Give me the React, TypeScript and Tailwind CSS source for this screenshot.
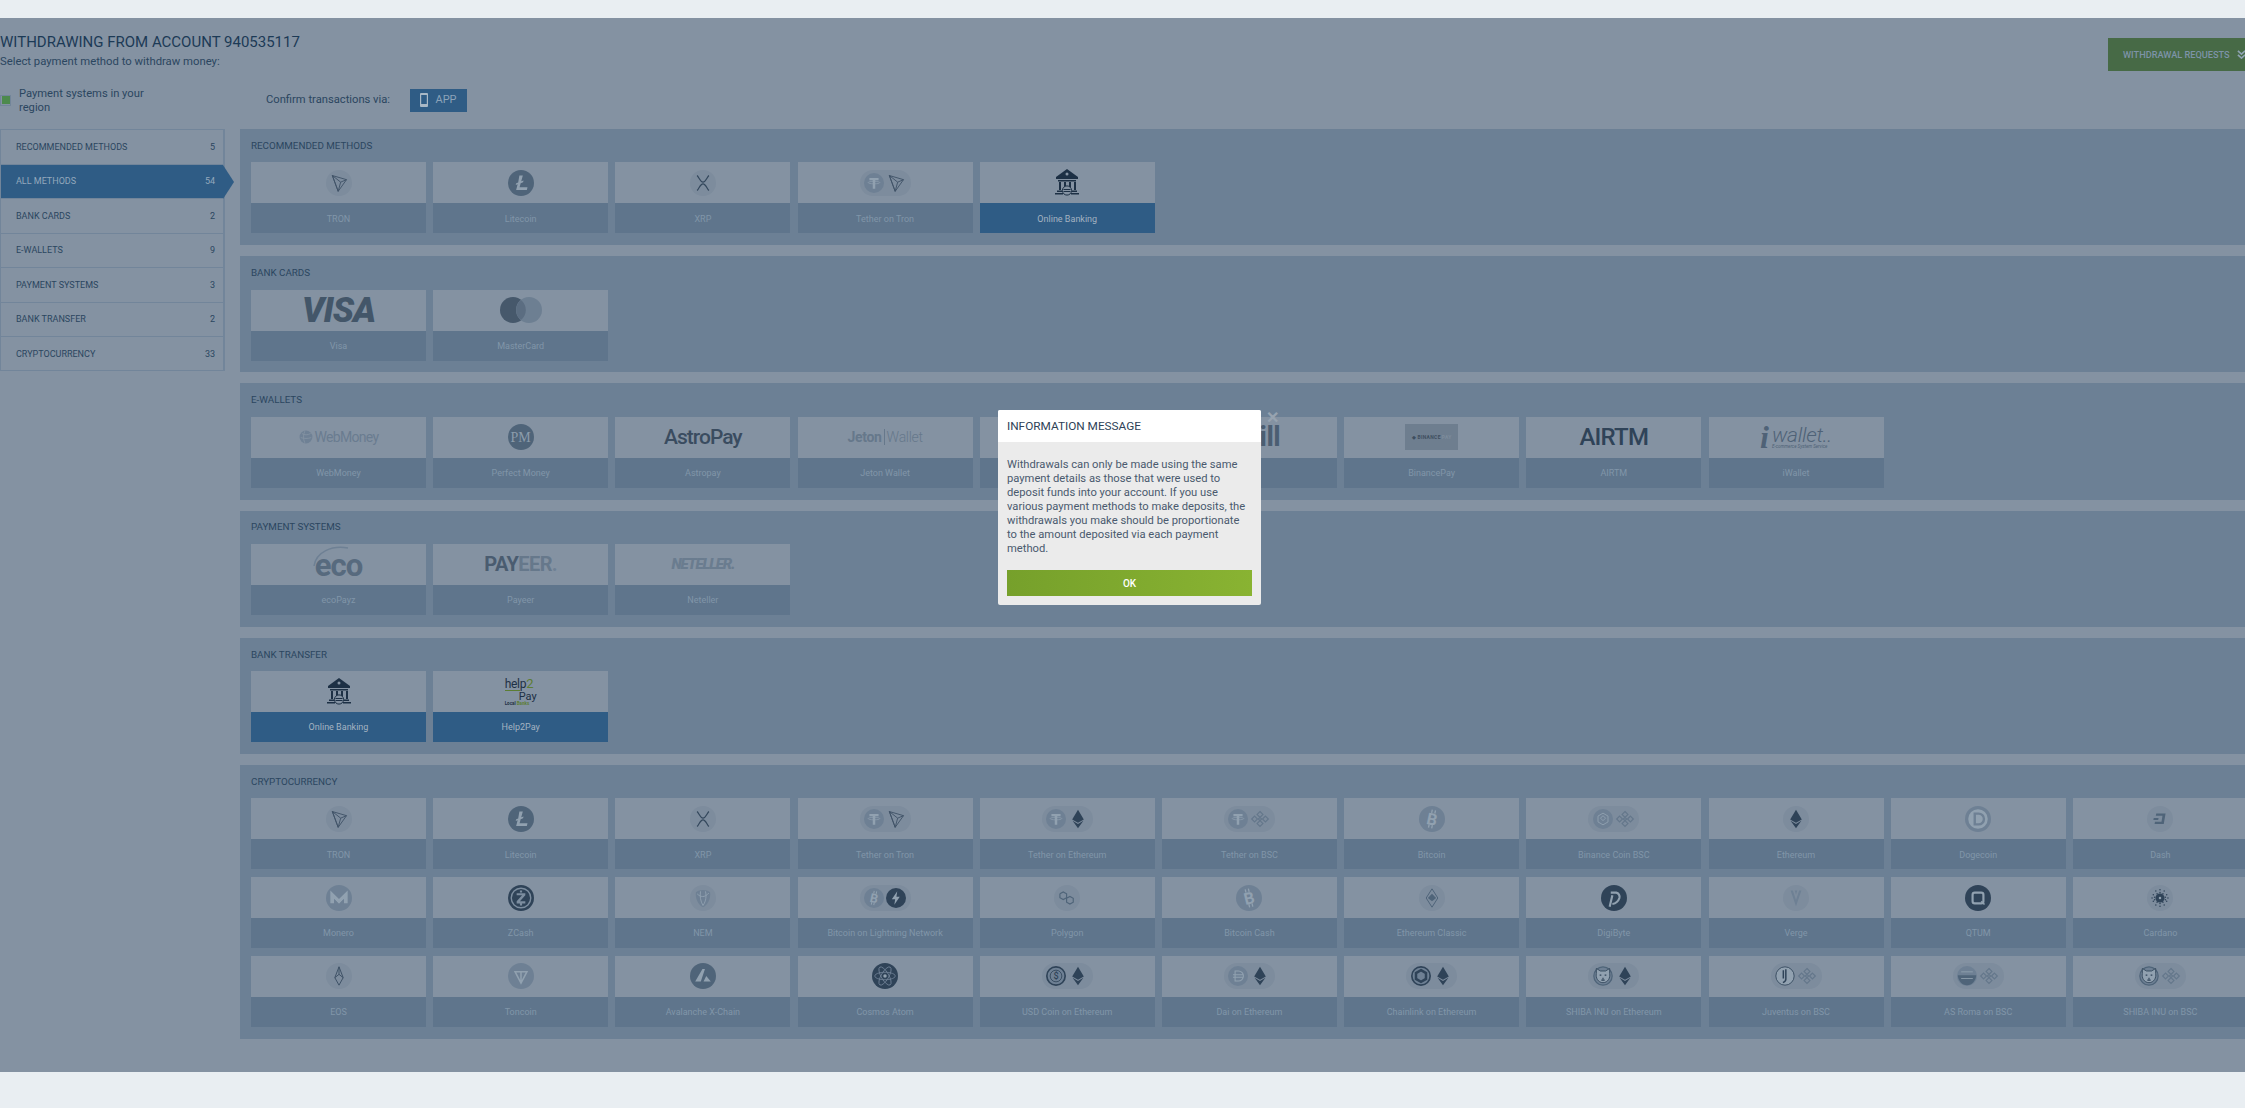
import type { ReactNode } from "react";

const DARK = "#2f4358";
const MID = "#4f6479";
const SOFT = "#6e8094";
const PALE = "#91a1b0";

const sideItems = [
  { label: "Recommended methods", count: 5 },
  { label: "All methods", count: 54, active: true },
  { label: "Bank cards", count: 2 },
  { label: "E-wallets", count: 9 },
  { label: "Payment systems", count: 3 },
  { label: "Bank transfer", count: 2 },
  { label: "Cryptocurrency", count: 33 },
];

type Method = { name: string; logo: string; active?: boolean };

const sections: { title: string; items: Method[] }[] = [
  {
    title: "Recommended methods",
    items: [
      { name: "TRON", logo: "tron" },
      { name: "Litecoin", logo: "ltc" },
      { name: "XRP", logo: "xrp" },
      { name: "Tether on Tron", logo: "usdt+tron" },
      { name: "Online Banking", logo: "bank", active: true },
    ],
  },
  {
    title: "Bank cards",
    items: [
      { name: "Visa", logo: "visa" },
      { name: "MasterCard", logo: "mastercard" },
    ],
  },
  {
    title: "E-wallets",
    items: [
      { name: "WebMoney", logo: "webmoney" },
      { name: "Perfect Money", logo: "pm" },
      { name: "Astropay", logo: "astropay" },
      { name: "Jeton Wallet", logo: "jeton" },
      { name: "", logo: "" },
      { name: "Skrill", logo: "skrill" },
      { name: "BinancePay", logo: "binancepay" },
      { name: "AIRTM", logo: "airtm" },
      { name: "iWallet", logo: "iwallet" },
    ],
  },
  {
    title: "Payment systems",
    items: [
      { name: "ecoPayz", logo: "eco" },
      { name: "Payeer", logo: "payeer" },
      { name: "Neteller", logo: "neteller" },
    ],
  },
  {
    title: "Bank transfer",
    items: [
      { name: "Online Banking", logo: "bank", active: true },
      { name: "Help2Pay", logo: "help2pay", active: true },
    ],
  },
  {
    title: "Cryptocurrency",
    items: [
      { name: "TRON", logo: "tron" },
      { name: "Litecoin", logo: "ltc" },
      { name: "XRP", logo: "xrp" },
      { name: "Tether on Tron", logo: "usdt+tron" },
      { name: "Tether on Ethereum", logo: "usdt+eth" },
      { name: "Tether on BSC", logo: "usdt+bnb" },
      { name: "Bitcoin", logo: "btc" },
      { name: "Binance Coin BSC", logo: "bnbcoin+bnb" },
      { name: "Ethereum", logo: "eth" },
      { name: "Dogecoin", logo: "doge" },
      { name: "Dash", logo: "dash" },
      { name: "Monero", logo: "xmr" },
      { name: "ZCash", logo: "zec" },
      { name: "NEM", logo: "nem" },
      { name: "Bitcoin on Lightning Network", logo: "btc+bolt" },
      { name: "Polygon", logo: "matic" },
      { name: "Bitcoin Cash", logo: "bch" },
      { name: "Ethereum Classic", logo: "etc" },
      { name: "DigiByte", logo: "dgb" },
      { name: "Verge", logo: "xvg" },
      { name: "QTUM", logo: "qtum" },
      { name: "Cardano", logo: "ada" },
      { name: "EOS", logo: "eos" },
      { name: "Toncoin", logo: "ton" },
      { name: "Avalanche X-Chain", logo: "avax" },
      { name: "Cosmos Atom", logo: "atom" },
      { name: "USD Coin on Ethereum", logo: "usdc+eth" },
      { name: "Dai on Ethereum", logo: "dai+eth" },
      { name: "Chainlink on Ethereum", logo: "link+eth" },
      { name: "SHIBA INU on Ethereum", logo: "shib+eth" },
      { name: "Juventus on BSC", logo: "juve+bnb" },
      { name: "AS Roma on BSC", logo: "roma+bnb" },
      { name: "SHIBA INU on BSC", logo: "shib+bnb" },
    ],
  },
];

const adaDots = [
  [12, 2], [7, 3.5], [17, 3.5], [12, 5.5], [8.5, 7], [15.5, 7], [4, 8], [20, 8], [5.5, 11], [18.5, 11],
  [2.5, 12], [21.5, 12], [5.5, 14], [18.5, 14], [4, 16], [20, 16], [8.5, 17], [15.5, 17], [12, 18.5],
  [7, 20.5], [17, 20.5], [12, 22],
];

// coin glyphs on a 24 unit box
function glyph(id: string): ReactNode {
  switch (id) {
    case "tron":
      return <path d="M4 3 21 8 11 22ZM4 3 14 11 21 8M14 11 11 22M4 3 11 22" fill="none" stroke="#3f5267" strokeWidth="1.100" />;
    case "ltc":
      return (
        <>
          <circle cx="12" cy="12" r="12" fill={MID} />
          <path d="M10.500 5h3.200l-1.500 5.400 2.200-.8-.5 1.800-2.200.8-1 3.700H18l-.6 2.600H7.500l1.400-5.300-1.800.7.5-1.700 1.800-.7z" fill={PALE} />
        </>
      );
    case "xrp":
      return <path d="M5 3c2.500 3 4 8 7 8s4.500-5 7-8M5 21c2.500-3 4-8 7-8s4.500 5 7 8" fill="none" stroke="#33475c" strokeWidth="1.500" />;
    case "usdt":
      return (
        <>
          <circle cx="12" cy="12" r="12" fill={SOFT} />
          <path d="M6.500 6h11v2.600h-4V19h-3V8.600h-4z" fill={PALE} />
          <ellipse cx="12" cy="11.500" rx="7" ry="1.500" fill="none" stroke={PALE} strokeWidth=".8" />
        </>
      );
    case "eth":
      return <path d="M12 1 19 12.500 12 16.500 5 12.500ZM12 18 18.500 14.200 12 23 5.500 14.200Z" fill={DARK} />;
    case "bnb":
      return <path d="M12 3l3.500 3.500L12 10 8.500 6.500zM5.500 8.500 9 12l-3.500 3.500L2 12zM18.500 8.500 22 12l-3.500 3.500L15 12zM12 14l3.500 3.500L12 21l-3.500-3.500zM12 10l2 2-2 2-2-2z" fill="none" stroke="#64778b" strokeWidth="1.400" />;
    case "bnbcoin":
      return (
        <>
          <circle cx="12" cy="12" r="12" fill={SOFT} />
          <path d="M12 5l6 3.500v7L12 19l-6-3.500v-7zM12 8l3 3-3 3-3-3z" fill="none" stroke={PALE} strokeWidth="1.100" />
        </>
      );
    case "btc":
    case "bch":
      return (
        <>
          <circle cx="12" cy="12" r="12" fill={SOFT} />
          <text x="12" y="17.500" textAnchor="middle" fontSize="15" fontWeight="700" fill={PALE} transform={id === "btc" ? "rotate(12 12 12)" : "rotate(-14 12 12)"}>B</text>
          <path d="M10.500 3.500v3M13.500 3.500v3M10.500 17.500v3M13.500 17.500v3" stroke={PALE} strokeWidth="1.200" transform={id === "btc" ? "rotate(12 12 12)" : "rotate(-14 12 12)"} />
        </>
      );
    case "doge":
      return (
        <>
          <circle cx="12" cy="12" r="12" fill={SOFT} />
          <circle cx="12" cy="12" r="9" fill={PALE} />
          <path d="M9 7h3.500a5 5 0 0 1 0 10H9z" fill="none" stroke={SOFT} strokeWidth="2.200" />
        </>
      );
    case "dash":
      return <path d="M7.500 5.500h11.200L16.500 18H5.500l.5-2.700h7.800l1.200-7.100H7zM4.500 10.800h5.800l-.5 2.400H4z" fill={MID} />;
    case "xmr":
      return (
        <>
          <circle cx="12" cy="12" r="12" fill={SOFT} />
          <path d="M4 17V5l8 8 8-8v12h-3.500v-4L12 17.500 7.500 13v4z" fill={PALE} />
          <path d="M1.500 17H7.500v-4L12 17.500 16.500 13v4h6a12 12 0 0 1-21 0z" fill={SOFT} />
        </>
      );
    case "zec":
      return (
        <>
          <circle cx="12" cy="12" r="12" fill={DARK} />
          <circle cx="12" cy="12" r="9" fill="none" stroke="#7c8d9f" strokeWidth="1.300" />
          <path d="M8 7.500h8v2l-5 5.500h5v2H8v-2l5-5.500H8zM11 5h2v2h-2zM11 17h2v2h-2z" fill="#7c8d9f" />
        </>
      );
    case "nem":
      return (
        <>
          <path d="M3.500 5C8 1.500 16 1.500 20.500 5c1 7-2.500 15-8.500 18C6 20 2.500 12 3.500 5z" fill={SOFT} />
          <path d="M5 7c4 4 9 5 14-1M9 4c-1 6 0 12 3 17M15 4c1 6 1 11-3 17" fill="none" stroke={PALE} strokeWidth="1.100" />
        </>
      );
    case "bolt":
      return (
        <>
          <circle cx="12" cy="12" r="12" fill={DARK} />
          <path d="M13.500 4 7 13.500h4L10 20l6.500-9.500h-4z" fill={PALE} />
        </>
      );
    case "matic":
      return (
        <path d="M3.500 7l4-2.300L11.500 7v10l4 2.300 4-2.300v-4.600l-4-2.300-4 2.300M3.500 7v4.600l4 2.300 4-2.300" fill="none" stroke={MID} strokeWidth="1.400" />
      );
    case "etc":
      return (
        <>
          <path d="M12 1 19 12 12 23 5 12Z" fill="none" stroke={MID} strokeWidth="1.200" />
          <path d="M12 7 17 12 12 16 7 12Z" fill={MID} />
        </>
      );
    case "dgb":
      return (
        <>
          <circle cx="12" cy="12" r="12" fill={DARK} />
          <path d="M9 7h5a4 4 0 0 1 3 5c-1 3-3 5-6.500 5.500M10.500 9.500 8 20" fill="none" stroke={PALE} strokeWidth="2" />
        </>
      );
    case "xvg":
      return <path d="M5.500 3 12 22l6.500-19h-2.700L12 14.500 8.200 3zM10.500 3h3L12 8z" fill={SOFT} />;
    case "qtum":
      return (
        <>
          <circle cx="12" cy="12" r="12" fill={DARK} />
          <rect x="7" y="7" width="10" height="10" rx="2" fill="none" stroke={PALE} strokeWidth="2" />
          <path d="M15 15l3 3" stroke={PALE} strokeWidth="1.500" />
        </>
      );
    case "ada":
      return (
        <>
          {adaDots.map(([x, y]) => (
            <circle key={`${x}-${y}`} cx={x} cy={y} r=".9" fill={DARK} />
          ))}
          <circle cx="12" cy="12" r="5.500" fill={DARK} />
          <circle cx="12" cy="12" r="1.500" fill={PALE} />
        </>
      );
    case "eos":
      return <path d="M12 1 7 14l5 9 5-9zM7 14l5-4 5 4M12 1v9" fill="none" stroke="#3f5267" strokeWidth="1.200" />;
    case "ton":
      return (
        <>
          <circle cx="12" cy="12" r="12" fill={SOFT} />
          <path d="M6.500 8h11L12 18.500zM12 8v10.500" fill="none" stroke={PALE} strokeWidth="1.400" />
        </>
      );
    case "avax":
      return (
        <>
          <circle cx="12" cy="12" r="12" fill={MID} />
          <path d="M11.500 5.500h2.300L10 17H4.800zM15 12l4.200 5h-6.700z" fill={PALE} />
        </>
      );
    case "atom":
      return (
        <>
          <circle cx="12" cy="12" r="12" fill={DARK} />
          <ellipse cx="12" cy="12" rx="9.500" ry="3.500" fill="none" stroke={SOFT} strokeWidth=".8" />
          <ellipse cx="12" cy="12" rx="9.500" ry="3.500" fill="none" stroke={SOFT} strokeWidth=".8" transform="rotate(60 12 12)" />
          <ellipse cx="12" cy="12" rx="9.500" ry="3.500" fill="none" stroke={SOFT} strokeWidth=".8" transform="rotate(120 12 12)" />
          <circle cx="12" cy="12" r="1.600" fill={PALE} />
        </>
      );
    case "usdc":
      return (
        <>
          <circle cx="12" cy="12" r="11" fill={SOFT} stroke={DARK} strokeWidth="2" />
          <circle cx="12" cy="12" r="7" fill="none" stroke={DARK} strokeWidth="1" />
          <text x="12" y="16" textAnchor="middle" fontSize="11" fontWeight="500" fill={DARK}>$</text>
        </>
      );
    case "dai":
      return (
        <>
          <circle cx="12" cy="12" r="12" fill={SOFT} />
          <path d="M8.500 6h4a6 6 0 0 1 0 12h-4zM6 10.500h12M6 13.500h12" fill="none" stroke={PALE} strokeWidth="1.300" />
        </>
      );
    case "link":
      return (
        <>
          <circle cx="12" cy="12" r="11" fill={SOFT} stroke={DARK} strokeWidth="2" />
          <path d="M12 5l6 3.500v7L12 19l-6-3.500v-7z" fill="none" stroke={DARK} strokeWidth="3" />
        </>
      );
    case "shib":
      return (
        <>
          <circle cx="12" cy="12" r="11" fill={SOFT} stroke={MID} strokeWidth="1.500" />
          <path d="M4 9V3l5 3h6l5-3v6c1 5-2 11-8 11S3 14 4 9z" fill={PALE} stroke={DARK} strokeWidth="1" />
          <path d="M8 11h2M14 11h2M12 14v2M10 17h4" stroke={DARK} strokeWidth="1.400" />
        </>
      );
    case "juve":
      return (
        <>
          <circle cx="12" cy="12" r="11" fill={PALE} stroke={DARK} strokeWidth="1" />
          <path d="M13 4v12c0 2-1 3-3.500 4M10 5v10" fill="none" stroke={DARK} strokeWidth="1.800" />
        </>
      );
    case "roma":
      return (
        <>
          <circle cx="12" cy="12" r="12" fill={SOFT} />
          <path d="M1 11h22c0 6-5 12-11 12S1 17 1 11z" fill={MID} />
          <path d="M5 7h14M5 15h14" stroke={PALE} strokeWidth="1" />
        </>
      );
    default:
      return null;
  }
}

function Coin({ id, size }: { id: string; size: number }) {
  return (
    <svg viewBox="0 0 24 24" width={size} height={size} className="shrink-0">
      {glyph(id)}
    </svg>
  );
}

const bigCoins = ["ltc", "btc", "bch", "doge", "xmr", "zec", "dgb", "qtum", "ton", "avax", "atom"];

function BankIcon() {
  return (
    <svg viewBox="0 0 26 27" width="26" height="27" fill="#1d3045">
      <path d="M13 0 24 8v2H2V8z" />
      <path d="M4 11h18v1.500H4zM5 13h2v8H5zM10 13h2v6h-2zM15 13h2v6h-2zM20 13h2v8h-2zM3 21.500h5v1.500H3zM1 24h8v1.500H1zM18 21.500h5v1.500h-5zM17 24h8v1.500h-8z" />
      <circle cx="13" cy="5" r="1.500" fill="#8492a2" />
      <circle cx="13" cy="21.500" r="4.600" fill="#8492a2" stroke="#1d3045" strokeWidth="1" />
      <path d="M9.500 20.500h7M9.500 22.500h7" stroke="#1d3045" strokeWidth="1" />
    </svg>
  );
}

function Logo({ id }: { id: string }) {
  switch (id) {
    case "":
      return null;
    case "bank":
      return <BankIcon />;
    case "visa":
      return <span className="text-[35px] leading-none font-black italic tracking-[-1px] text-[#435669]">VISA</span>;
    case "mastercard":
      return (
        <svg viewBox="0 0 42 26" width="42" height="26">
          <circle cx="13" cy="13" r="13" fill="#46586b" />
          <circle cx="29" cy="13" r="13" fill="#6d7f92" />
          <path d="M21 2.900a13 13 0 0 1 0 20.200 13 13 0 0 1 0-20.200z" fill="#5b6d81" />
        </svg>
      );
    case "webmoney":
      return (
        <span className="flex items-center gap-[2px] text-[#6a7c90]">
          <svg viewBox="0 0 24 24" width="14" height="14">
            <circle cx="12" cy="12" r="11" fill="#6f8195" />
            <path d="M5 6c5 3 9 3 15 0M3 13c6 2 12 2 18 0M10 2c-3 6-3 14 0 20" fill="none" stroke="#8492a2" strokeWidth="1.500" />
          </svg>
          <span className="text-[14px] leading-none font-normal tracking-[-.7px]">WebMoney</span>
        </span>
      );
    case "pm":
      return (
        <span className="flex h-[26px] w-[26px] items-center justify-center rounded-full bg-[#4f6479] font-['Liberation_Serif',serif] text-[14px] text-[#8b9cab]">PM</span>
      );
    case "astropay":
      return <span className="text-[21px] leading-none font-medium tracking-[-1px] text-[#3a4c60]">AstroPay</span>;
    case "jeton":
      return (
        <span className="flex items-center text-[14px] leading-none tracking-[-.3px] text-[#66788b]">
          <span className="font-bold">Jeton</span>
          <span className="mx-[2px] h-[16px] w-px bg-[#66788b]" />
          <span className="font-light">Wallet</span>
        </span>
      );
    case "skrill":
      return <span className="text-[28px] leading-none font-bold tracking-[-.5px] text-[#4b5e72]">Skrill</span>;
    case "binancepay":
      return (
        <span className="flex h-[26px] w-[53px] items-center justify-center gap-[1px] bg-[#6e7e8f] text-[5px] font-bold tracking-[.3px] text-[#3e4e5f]">
          <span>◆ BINANCE</span>
          <span className="text-[#7d8c9c]">PAY</span>
        </span>
      );
    case "airtm":
      return <span className="text-[24px] leading-none font-medium tracking-[-.8px] text-[#2f4358]">AIRTM</span>;
    case "iwallet":
      return (
        <span className="flex items-center gap-[3px] text-[#4f6277]">
          <span className="font-['Liberation_Serif',serif] text-[32px] leading-none font-bold italic">i</span>
          <span className="flex flex-col items-start">
            <span className="text-[21px] leading-[18px] font-light italic tracking-[-.3px]">wallet..</span>
            <span className="text-[4.500px] leading-[5px] italic">E-commerce System Service</span>
          </span>
        </span>
      );
    case "eco":
      return (
        <span className="relative pt-[3px] text-[31px] leading-none font-bold tracking-[-1px] text-[#576a7e]">
          eco
          <svg viewBox="0 0 55 24" width="55" height="24" className="absolute -left-[3px] -top-[1px]">
            <path d="M2 20C4 6 20-1 36 2" fill="none" stroke="#6e8094" strokeWidth="1.500" />
          </svg>
        </span>
      );
    case "payeer":
      return (
        <span className="text-[20px] leading-none font-bold tracking-[-.6px] text-[#4a5c70]">
          PAY<span className="text-[#66788b]">EER</span>
          <span className="text-[#6e8094]">.</span>
        </span>
      );
    case "neteller":
      return <span className="text-[15px] leading-none font-black italic tracking-[-1.200px] text-[#6a7c8f]">NETELLER.</span>;
    case "help2pay":
      return (
        <span className="flex w-[32px] flex-col leading-none">
          <span className="flex items-end text-[12px] tracking-[-.3px] text-[#1d3045]">
            help<span className="text-[13px] text-[#5c7d34]">2</span>
          </span>
          <span className="h-px w-[15px] bg-[#5c7d34]" />
          <span className="self-end text-[11px] text-[#1d3045]">Pay</span>
          <span className="text-[4.500px] font-bold text-[#1d3045]">
            Local <span className="text-[#5c7d34]">Banks</span>
          </span>
        </span>
      );
    default:
  }

  const parts = id.split("+");
  if (parts.length === 2) {
    return (
      <span className="flex h-[26px] w-[51px] items-center justify-center gap-[2px] rounded-full bg-[#7d8c9d]">
        <Coin id={parts[0]} size={20} />
        <Coin id={parts[1]} size={20} />
      </span>
    );
  }
  if (bigCoins.includes(id)) return <Coin id={id} size={26} />;
  return (
    <span className="flex h-[26px] w-[26px] items-center justify-center rounded-full bg-[#7d8c9d]">
      <Coin id={id} size={20} />
    </span>
  );
}

function MethodCard({ item }: { item: Method }) {
  return (
    <div className="flex h-[71px] w-[175px] flex-col bg-[#8492a2]">
      <div className="flex h-[41px] items-center justify-center">
        <Logo id={item.logo} />
      </div>
      <div
        className={`flex h-[30px] items-center justify-center pt-[2px] text-[9px] ${
          item.active ? "bg-[#2f5c85] text-[#a4b3c1]" : "bg-[#5f758c] text-[#8195a9]"
        }`}
      >
        {item.name}
      </div>
    </div>
  );
}

export default function App() {
  return (
    <div className="relative h-[1108px] w-[2245px] overflow-hidden bg-[#e9eef2] pt-[18px] font-[Roboto,sans-serif]">
      <div className="h-[1054px] bg-[#8492a2]">
        <header className="flex items-start justify-between pt-[14px]">
          <div>
            <h1 className="text-[15px] leading-[20px] font-normal text-[#1c3a56]">WITHDRAWING FROM ACCOUNT 940535117</h1>
            <p className="mt-[2px] text-[11.300px] leading-[16px] text-[#2b4660]">Select payment method to withdraw money:</p>
          </div>
          <button className="mt-[6px] flex h-[33px] w-[137px] items-center gap-[7px] bg-[#476a46] pt-[1px] pl-[15px] text-[9.200px] font-medium whitespace-nowrap text-[#7d93a8]">
            WITHDRAWAL REQUESTS
            <svg viewBox="0 0 10 10" width="9" height="9" fill="none" stroke="#8fa3b4" strokeWidth="1.800" className="-mt-[2px] shrink-0">
              <path d="M1 1l4 3.500L9 1M1 5.500 5 9l4-3.500" />
            </svg>
          </button>
        </header>

        <div className="mt-[15px] flex h-[28px] items-center">
          <div className="flex w-[266px] items-center">
            <span className="flex h-[11px] w-[11px] items-center justify-center border border-[#72859a]">
              <span className="h-[8px] w-[8px] bg-[#4d8a4d]" />
            </span>
            <span className="ml-[8px] w-[140px] pt-[1px] text-[11.200px] leading-[14px] text-[#2b4660]">Payment systems in your region</span>
          </div>
          <span className="w-[125px] pt-[1px] text-[11.200px] whitespace-nowrap text-[#2b4660]">Confirm transactions via:</span>
          <button className="ml-[19px] flex h-[23px] w-[57px] items-center justify-center gap-[7px] bg-[#2f5c85] text-[11px] text-[#8ca3b9]">
            <svg viewBox="0 0 8 14" width="8" height="14">
              <rect width="8" height="14" rx="1" fill="#a9b8c6" />
              <rect x="1.200" y="2" width="5.600" height="9" fill="#2f5c85" />
            </svg>
            APP
          </button>
        </div>

        <div className="mt-[15px] flex items-start">
          <nav className="h-[242px] w-[225px] shrink-0 border border-r-2 border-[#72859a]">
            {sideItems.map((s) => (
              <div
                key={s.label}
                className={`relative flex h-[34.500px] items-center justify-between border-b border-[#72859a] pt-[1px] pr-[8px] pl-[15px] text-[9px] uppercase last:border-b-0 ${
                  s.active ? "bg-[#2f5c85] text-[#93a8bc]" : "text-[#2b4660]"
                }`}
              >
                <span>{s.label}</span>
                <span>{s.count}</span>
                {s.active && (
                  <span className="absolute top-0 left-full h-0 w-0 border-y-[17px] border-l-[11px] border-y-transparent border-l-[#2f5c85]" />
                )}
              </div>
            ))}
          </nav>

          <main className="ml-[15px] w-[2040px] shrink-0">
            {sections.map((sec) => (
              <section key={sec.title} className="mb-[11px] bg-[#6c8095] pb-[11.800px] pl-[11px]">
                <h2 className="flex h-[33.400px] items-center pt-[1px] text-[9.800px] font-normal text-[#2b4660] uppercase">{sec.title}</h2>
                <div className="flex flex-wrap gap-x-[7.200px] gap-y-[7.800px]">
                  {sec.items.map((item) => (
                    <MethodCard key={`${item.name}-${item.logo}`} item={item} />
                  ))}
                </div>
              </section>
            ))}
          </main>
        </div>
      </div>

      <div className="absolute top-[410px] left-[998px] h-[195px] w-[263px] overflow-hidden rounded-[2px] bg-[#ebebeb]">
        <div className="flex h-[32px] items-center bg-white px-[9px] pt-[1px] text-[11.800px] font-normal text-[#2e4257]">INFORMATION MESSAGE</div>
        <div className="px-[9px] pt-[16px]">
          <p className="text-[11.200px] leading-[14px] text-[#4a5a6e]">
            Withdrawals can only be made using the same payment details as those that were used to deposit funds into your account. If you use various payment methods to make deposits, the withdrawals you make should be proportionate to the amount deposited via each payment method.
          </p>
          <button className="mt-[14px] flex h-[26px] w-full items-center justify-center bg-gradient-to-r from-[#76a02b] to-[#89b332] text-[10px] font-medium text-white">OK</button>
        </div>
      </div>
      <span className="absolute top-[411px] left-[1266px] text-[16px] leading-[14px] font-bold text-[#97a3b0]">✕</span>
    </div>
  );
}
